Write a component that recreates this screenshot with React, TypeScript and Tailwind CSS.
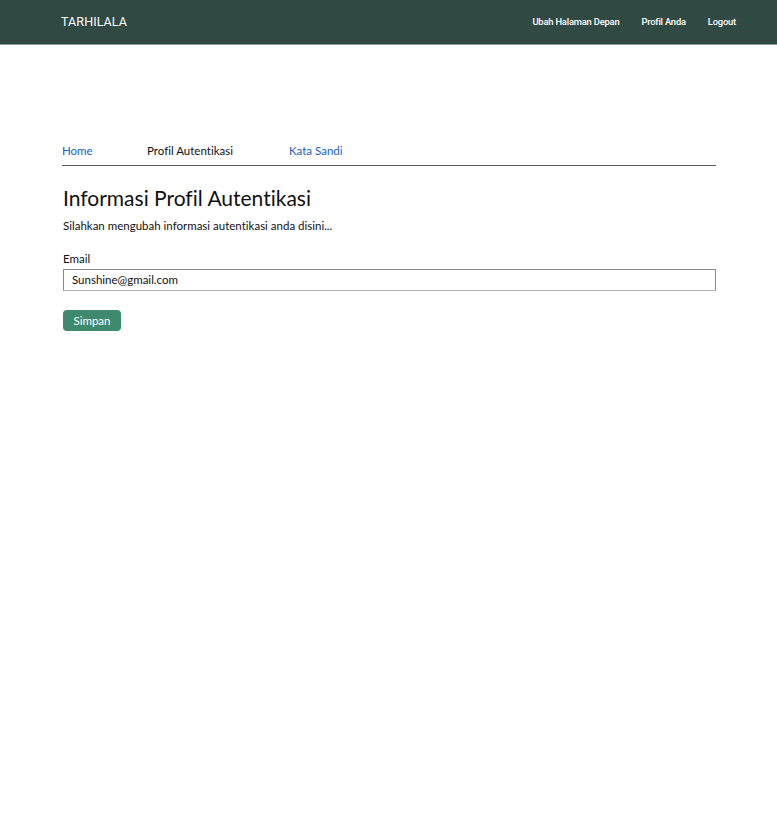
import React from "react";

export default function App() {
  const body = { fontFamily: 'Lato, "Noto Sans", sans-serif' };
  const nav = { fontFamily: 'Roboto, "Liberation Sans", sans-serif' };
  return (
    <div className="min-h-[813px] w-full bg-white [font-variant-ligatures:none]" style={body}>
      <header className="h-[45px] bg-[#304a43] border-b border-[#8a9a95] flex items-center justify-between pl-[61px] pr-[41px]">
        <div className="text-white text-[12.5px] tracking-[0.1px] pt-px" style={nav}>TARHILALA</div>
        <nav className="flex items-center gap-[22px] text-white text-[9.4px] font-medium tracking-[-0.2px] pt-px" style={nav}>
          <span>Ubah Halaman Depan</span>
          <span>Profil Anda</span>
          <span>Logout</span>
        </nav>
      </header>
      <main className="pl-[62px] pr-[61px] pt-[99px]">
        <div className="flex items-end h-[14px] text-[11.5px] leading-[14px]">
          <span className="text-[#2160c4] w-[85px]">Home</span>
          <span className="text-[#111] w-[142px]">Profil Autentikasi</span>
          <span className="text-[#2160c4]">Kata Sandi</span>
        </div>
        <div className="mt-[7px] h-px bg-[#5a5a5a]" />
        <h1 className="mt-[20px] ml-px text-[21px] leading-[24px] text-[#111]">Informasi Profil Autentikasi</h1>
        <p className="mt-[9px] ml-px text-[11.5px] leading-[14px] text-[#111]">Silahkan mengubah informasi autentikasi anda disini...</p>
        <div className="mt-[19px] ml-px text-[11.5px] leading-[14px] text-[#111]">Email</div>
        <div className="mt-[3px] ml-px h-[22px] border border-[#8a8a8a] border-b-[#b0b0b0] flex items-center pl-[8px] text-[11.5px] text-[#111]">
          Sunshine@gmail.com
        </div>
        <button className="mt-[19px] ml-px h-[21px] w-[58px] rounded-[4px] bg-[#3e8a6f] text-white text-[11.5px] flex items-center justify-center">
          Simpan
        </button>
      </main>
    </div>
  );
}
